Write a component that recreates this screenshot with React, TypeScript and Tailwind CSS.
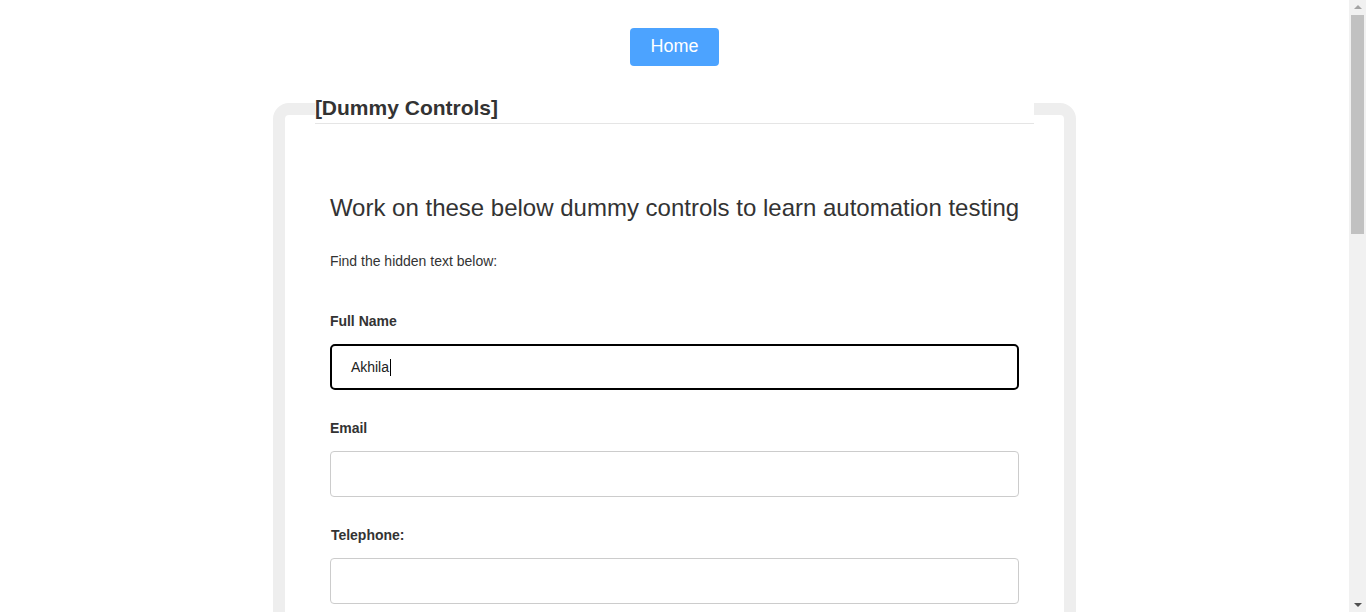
import React from "react";

const Label = ({ children, extra = "" }: { children: React.ReactNode; extra?: string }) => (
  <div className={`text-[14px] leading-[20px] font-bold text-[#333333] ${extra}`}>{children}</div>
);

const Field = () => (
  <div className="mt-[13px] h-[46px] w-full rounded-[4px] border border-[#cccccc] bg-white" />
);

export default function App() {
  return (
    <div
      className="min-h-[1615px] bg-white pr-[17px] text-[#333333]"
      style={{ fontFamily: '"Liberation Sans", Arial, sans-serif' }}
    >
      <div className="fixed right-0 top-0 flex h-[612px] w-[17px] flex-col items-center bg-[#f1f1f1]">
        <div className="mt-[5px] h-0 w-0 border-x-[4px] border-b-[4px] border-x-transparent border-b-[#a3a3a3]" />
        <div className="mt-[6px] h-[219px] w-[13px] bg-[#c1c1c1]" />
        <div className="flex-1" />
        <div className="mb-[5px] h-0 w-0 border-x-[4px] border-t-[4px] border-x-transparent border-t-[#505050]" />
      </div>
      <div className="flex justify-center pt-[28px]">
        <button className="h-[38px] w-[89px] rounded-[4px] bg-[#4ca3ff] pb-[3px] text-[18px] leading-[20px] text-white">
          Home
        </button>
      </div>
      <div className="flex justify-center pt-[27px]">
        <fieldset className="w-[803px] rounded-[16px] border-[12px] border-[#eeeeee] px-[30px] pb-[300px]">
          <legend className="w-full border-b border-[#e5e5e5] text-[21px] font-bold leading-[30px] text-[#333]">
            [Dummy Controls]
          </legend>
          <div className="px-[15px]">
            <h3 className="mt-[71px] whitespace-nowrap text-[24px] leading-[26px] text-[#333333]">
              Work on these below dummy controls to learn automation testing
            </h3>
            <p className="mt-[30px] text-[14px] leading-[20px] text-[#333333]">
              Find the hidden text below:
            </p>

            <div className="mt-[40px]">
              <Label>Full Name</Label>
              <div className="mt-[13px] flex h-[46px] w-full items-center rounded-[5px] border-2 border-black bg-white pl-[19px] text-[14px] text-[#222]">
                <span>Akhila</span>
                <span className="ml-px inline-block h-[17px] w-px bg-black" />
              </div>
            </div>

            <div className="mt-[28px]">
              <Label>Email</Label>
              <Field />
            </div>

            <div className="mt-[28px]">
              <Label extra="ml-px">Telephone:</Label>
              <Field />
            </div>

            <div className="mt-[28px]">
              <Label>Address</Label>
              <Field />
            </div>

            <div className="mt-[28px]">
              <Label>Gender</Label>
              <Field />
            </div>

            <div className="mt-[28px]">
              <button className="h-[40px] w-[100px] rounded-[4px] bg-[#4ca3ff] text-[16px] text-white">
                Submit
              </button>
            </div>
          </div>
        </fieldset>
      </div>
    </div>
  );
}
